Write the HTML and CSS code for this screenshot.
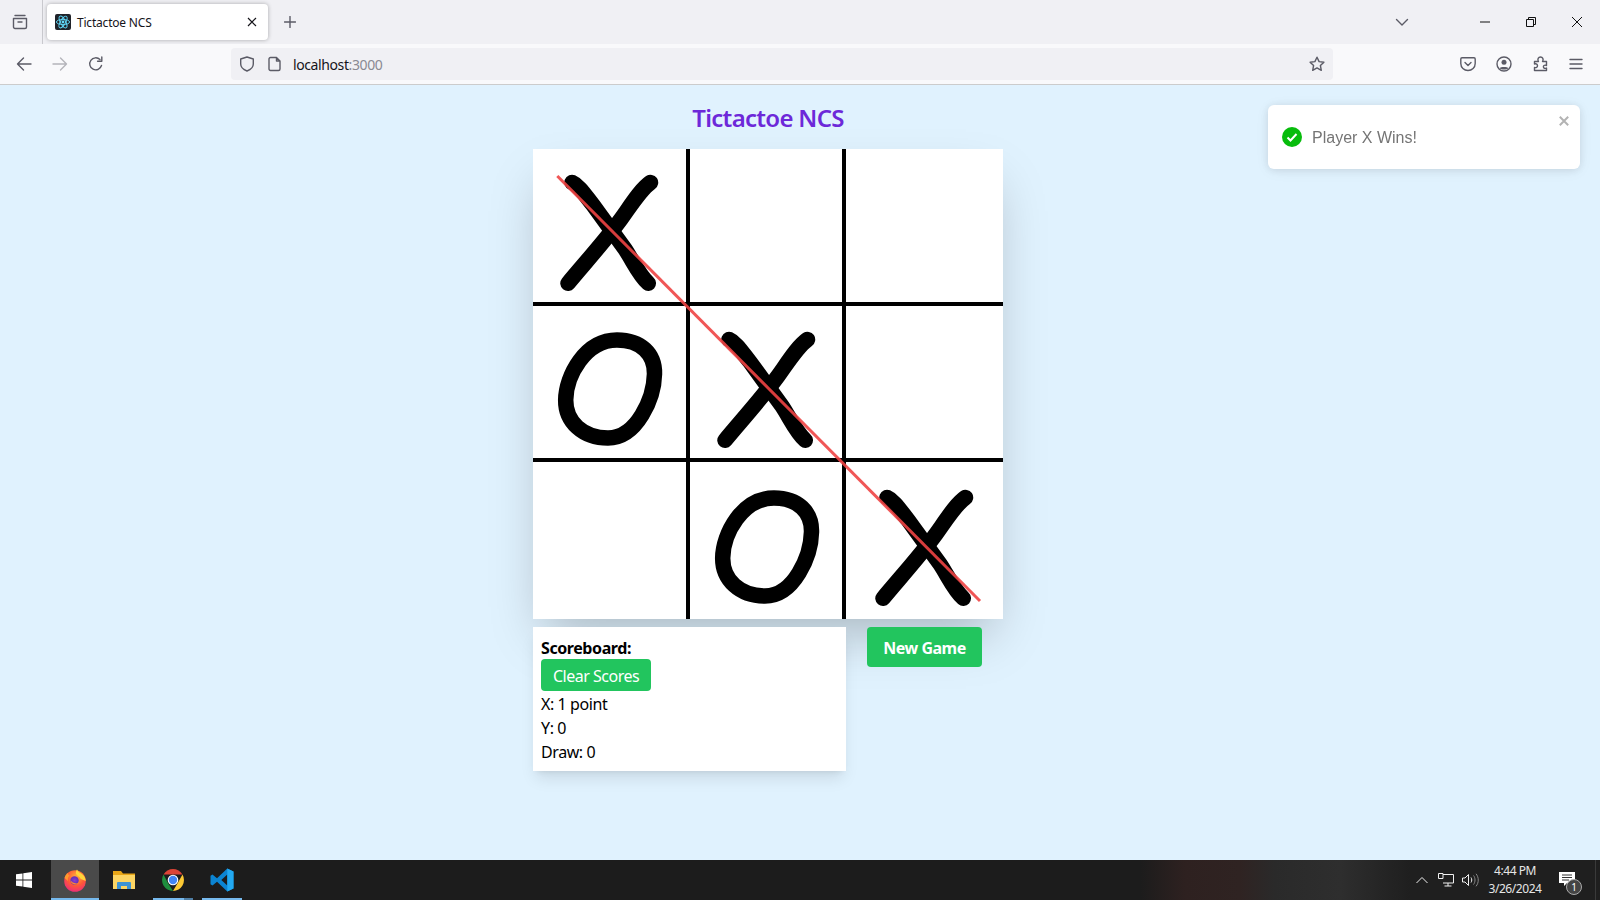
FILE: index.html
```html
<!DOCTYPE html>
<html lang="en">
<head>
<meta charset="utf-8">
<title>Tictactoe NCS</title>
<link rel="stylesheet" href="styles.css">
</head>
<body>
<svg class="defs" width="0" height="0" aria-hidden="true">
  <defs>
    <g id="mark-x">
      <path d="M39 33.500C46 36.500 52 46 60 56L92 100C100 112 106 126 115.3 134.3"/>
      <path d="M117.5 33.500C108 40 98 56 88 70C72 92 50 116 35 134.3"/>
    </g>
    <path id="mark-o" d="M32.7 94C33 70 52 34 84 34C108 34 122 48 121.5 68C121 92 104 132 75 132C50 132 32.5 116 32.7 94Z"/>
  </defs>
</svg>

<header class="tabbar">
  <div class="tabbar-left">
    <svg class="ico" width="16" height="16" viewBox="0 0 16 16"><path d="M3 1.5h10M1.5 4.5h13v8.5a1.5 1.5 0 0 1-1.5 1.5H3A1.5 1.5 0 0 1 1.5 13zM6 8h4"/></svg>
  </div>
  <div class="tab">
    <svg class="favicon" width="16" height="16" viewBox="0 0 16 16">
      <rect width="16" height="16" rx="2" fill="#20232a"/>
      <g fill="none" stroke="#61dafb" stroke-width=".9">
        <ellipse cx="8" cy="8" rx="6.6" ry="2.6"/>
        <ellipse cx="8" cy="8" rx="6.6" ry="2.6" transform="rotate(60 8 8)"/>
        <ellipse cx="8" cy="8" rx="6.6" ry="2.6" transform="rotate(120 8 8)"/>
      </g>
      <circle cx="8" cy="8" r="1.4" fill="#61dafb"/>
    </svg>
    <span class="tab-title">Tictactoe NCS</span>
    <svg class="tab-close" width="10" height="10" viewBox="0 0 10 10"><path d="M1 1l8 8M9 1l-8 8"/></svg>
  </div>
  <svg class="ico new-tab" width="12" height="12" viewBox="0 0 12 12"><path d="M6 .5v11M.5 6h11"/></svg>
  <div class="tabbar-right">
    <svg class="ico tab-list" width="14" height="14" viewBox="0 0 14 14"><path d="M1.500 4.500L7 10l5.500-5.500"/></svg>
    <div class="winbtn"><svg class="win" width="12" height="12" viewBox="0 0 12 12"><path d="M1 6h10"/></svg></div>
    <div class="winbtn"><svg class="win" width="12" height="12" viewBox="0 0 12 12"><path d="M1.500 3.500h7v7h-7zM3.500 3.500v-2h7v7h-2"/></svg></div>
    <div class="winbtn"><svg class="win" width="12" height="12" viewBox="0 0 12 12"><path d="M1 1l10 10M11 1L1 11"/></svg></div>
  </div>
</header>

<nav class="toolbar">
  <div class="nav-buttons">
    <svg class="ico" width="16" height="16" viewBox="0 0 16 16"><path d="M15 8H1.500M7.500 2l-6 6 6 6"/></svg>
    <svg class="ico faint" width="16" height="16" viewBox="0 0 16 16"><path d="M1 8h13.500M8.500 2l6 6-6 6"/></svg>
    <svg class="ico" width="16" height="16" viewBox="0 0 16 16"><path d="M13.500 9.500A6 6 0 1 1 12 3.600M13.800 1v4.200H9.600"/></svg>
  </div>
  <div class="urlbar">
    <svg class="ico" width="16" height="16" viewBox="0 0 16 16"><path d="M8 1l6.300 2v5c0 3.300-2.600 5.600-6.300 7-3.700-1.400-6.300-3.700-6.300-7V3z"/></svg>
    <svg class="ico page-ico" width="14" height="16" viewBox="0 0 14 16"><path d="M2.500 1.500h6l3.500 3.500v8a1.500 1.500 0 0 1-1.500 1.500h-8A1.500 1.500 0 0 1 1 13V3a1.500 1.500 0 0 1 1.500-1.500zM8.500 1.500V5H12"/></svg>
    <span class="url">localhost<span class="url-dim">:3000</span></span>
    <svg class="ico star" width="16" height="16" viewBox="0 0 16 16"><path d="M8 1.200l2.100 4.400 4.800.6-3.500 3.300.9 4.800L8 11.900l-4.300 2.400.9-4.800L1.100 6.200l4.800-.6z"/></svg>
  </div>
  <div class="toolbar-right">
    <svg class="ico" width="16" height="16" viewBox="0 0 16 16"><path d="M2 1.800h12a1.200 1.200 0 0 1 1.200 1.200v4.500c0 4-3.200 7-7.200 7s-7.200-3-7.200-7V3A1.200 1.200 0 0 1 2 1.800zM5 6.500l3 3 3-3"/></svg>
    <svg class="ico" width="16" height="16" viewBox="0 0 16 16"><circle cx="8" cy="8" r="7"/><circle cx="8" cy="6.300" r="2.500" class="solid"/><path d="M3.500 12c1-1.500 8-1.500 9 0-1.500 2-7.500 2-9 0z" class="solid"/></svg>
    <svg class="ico ext-ico" width="16" height="16" viewBox="0 0 16 16"><path d="M1.500 5.500h4C4 3 5.500 1 7.500 1s3.500 2 2 4.500h4v4c-2.300-1-3.500.5-3 1.800.3 1 1.500 1.500 3 .7v2.500h-12v-3c2 .5 3-.6 3-1.800s-1.200-2.400-3-1.700z"/></svg>
    <svg class="ico" width="16" height="16" viewBox="0 0 16 16"><path d="M2 3.500h12M2 8h12M2 12.500h12"/></svg>
  </div>
</nav>

<main class="page">
  <div class="container">
    <h1 class="title">Tictactoe NCS</h1>
    <div class="board">
      <div class="cell cell-r cell-b"><svg class="mark" viewBox="0 0 152.670 152.670"><use href="#mark-x"/></svg></div>
      <div class="cell cell-r cell-b"></div>
      <div class="cell cell-b"></div>
      <div class="cell cell-r cell-b"><svg class="mark" viewBox="0 0 152.670 152.670"><use href="#mark-o"/></svg></div>
      <div class="cell cell-r cell-b"><svg class="mark" viewBox="0 0 152.670 152.670"><use href="#mark-x"/></svg></div>
      <div class="cell cell-b"></div>
      <div class="cell cell-r"></div>
      <div class="cell cell-r"><svg class="mark" viewBox="0 0 152.670 152.670"><use href="#mark-o"/></svg></div>
      <div class="cell"><svg class="mark" viewBox="0 0 152.670 152.670"><use href="#mark-x"/></svg></div>
      <svg class="win-line" viewBox="0 0 470 470"><line x1="24.300" y1="27" x2="447" y2="452"/></svg>
    </div>
    <div class="under">
      <section class="scoreboard">
        <div class="score-row score-head">Scoreboard:</div>
        <button class="btn">Clear Scores</button>
        <div class="score-row">X: 1 point</div>
        <div class="score-row">Y: 0</div>
        <div class="score-row">Draw: 0</div>
      </section>
      <div class="actions"><button class="btn btn-bold">New Game</button></div>
    </div>
  </div>
</main>

<div class="toast">
  <svg class="toast-icon" width="20" height="20" viewBox="0 0 20 20"><circle cx="10" cy="10" r="10" fill="#07bc0c"/><path d="M5.500 10.500l3 3 6-6.500" fill="none" stroke="#fff" stroke-width="2"/></svg>
  <span class="toast-text">Player X Wins!</span>
  <svg class="toast-close" width="10" height="10" viewBox="0 0 10 10"><path d="M.8.800l8.400 8.400M9.200.800L.8 9.200"/></svg>
</div>

<footer class="taskbar">
  <div class="start"><svg width="16" height="16" viewBox="0 0 16 16" fill="#fff"><path d="M0 2.300l6.500-.9v6.200H0zM7.300 1.300L16 0v7.600H7.300zM0 8.400h6.500v6.200L0 13.700zM7.300 8.400H16V16l-8.700-1.300z"/></svg></div>
  <div class="task task-active">
    <svg width="24" height="24" viewBox="0 0 24 24">
      <defs>
        <radialGradient id="ff" cx=".55" cy=".3" r=".8"><stop offset="0" stop-color="#ffb03a"/><stop offset=".5" stop-color="#ff5a36"/><stop offset="1" stop-color="#e9218a"/></radialGradient>
        <radialGradient id="ffc" cx=".5" cy=".5" r=".6"><stop offset="0" stop-color="#8a3fd0"/><stop offset="1" stop-color="#5a2bb0"/></radialGradient>
      </defs>
      <circle cx="12" cy="13" r="10.800" fill="url(#ff)"/>
      <path d="M14 1.500c1 2.500 3 3 5 4.500 2.500 2 3.700 4.500 3.800 7l-5-2c-1-2.500-4-3-5-5.500 0-1.500.5-3 1.200-4z" fill="#ffd43a"/>
      <path d="M1.500 10c1-3 2-4 3.500-5 0 1.500.5 2 1.500 2.500C5 9 4.500 11 5 13z" fill="#ff9a2e"/>
      <circle cx="11.500" cy="12.500" r="4.200" fill="url(#ffc)"/>
      <path d="M7.500 12c0 3 2.500 4.500 5 4.500 1.500 0 3-.8 3.600-2-1 .8-2.600 1.200-4 .8-2-.5-3.500-1.500-4.600-3.300z" fill="#ff8a2e"/>
    </svg>
  </div>
  <div class="task">
    <svg width="22" height="20" viewBox="0 0 22 20">
      <path d="M0 1h8l2 2.500h12V19H0z" fill="#e8a617"/>
      <path d="M0 5h22v14H0z" fill="#fcd563"/>
      <path d="M4 19v-6a1 1 0 0 1 1-1h12a1 1 0 0 1 1 1v6h-4v-3H8v3z" fill="#3d93d4"/>
    </svg>
  </div>
  <div class="task task-open task-multi">
    <svg width="24" height="24" viewBox="0 0 24 24">
      <path d="M2.500 6.500A11 11 0 0 1 21.500 6.500H12z" fill="#db4437"/>
      <path d="M21.500 6.500A11 11 0 0 1 12 23l5-8.500z" fill="#fcc934"/>
      <path d="M12 23A11 11 0 0 1 2.500 6.500L7 15z" fill="#1e8e3e"/>
      <circle cx="12" cy="12" r="5.300" fill="#fff"/>
      <circle cx="12" cy="12" r="4.200" fill="#4285f4"/>
    </svg>
  </div>
  <div class="task task-open">
    <svg width="24" height="24" viewBox="0 0 24 24">
      <path d="M17.300 0.500L23.500 3.500V20.500L17.300 23.500L7 13.800L2.500 17.400L0.500 16.200V7.800L2.500 6.600L7 10.200zM17.300 6.500L11.300 12L17.300 17.500z" fill="#0b84d2"/>
      <path d="M17.300 0.500L23.500 3.500V20.500L17.300 23.500z" fill="#23a9f1"/>
    </svg>
  </div>
  <div class="tray">
    <svg class="tray-ico tray-up" width="12" height="8" viewBox="0 0 12 8"><path d="M.5 7L6 1.500 11.500 7"/></svg>
    <svg class="tray-ico tray-net" width="16" height="14" viewBox="0 0 16 14"><path d="M5 1.500h10.500v8.500H5M10 10v3M6.500 13h7M.5.500h4.500v5H.5z"/></svg>
    <svg class="tray-ico tray-vol" width="17" height="14" viewBox="0 0 17 14"><path d="M.5 5h2.500L6.500 1.500v11L3 9H.5zM9 4.500c1 1.500 1 3.500 0 5"/><path class="dim" d="M11.500 2.500c2 2.500 2 6.500 0 9M14 .8c3 3.500 3 9 0 12.500"/></svg>
    <div class="clock"><span>4:44 PM</span><span>3/26/2024</span></div>
    <div class="notify">
      <svg width="16" height="15" viewBox="0 0 16 15"><path d="M0 0h16v11H8l-3 3v-3H0z" fill="#fff"/><path d="M3 3h10M3 5.500h10M3 8h7" stroke="#333" stroke-width="1"/></svg>
      <span class="badge">1</span>
    </div>
  </div>
</footer>
</body>
</html>
```
FILE: styles.css
```css
* { box-sizing: border-box; }
html, body { margin: 0; padding: 0; }
body {
  width: 1600px;
  height: 900px;
  overflow: hidden;
  display: flex;
  flex-direction: column;
  background: #e0f2fe;
  font-family: "Noto Sans", "Open Sans", sans-serif;
  color: #000;
}
.defs { position: absolute; }
svg { display: block; flex: none; }

.ico { fill: none; stroke: #5b5b66; stroke-width: 1.4; stroke-linejoin: round; stroke-linecap: round; }
.ico .solid { fill: #5b5b66; stroke: none; }
.faint { stroke: #b4b4ba; }

.tabbar { height: 44px; flex: none; display: flex; align-items: center; background: #f0f0f4; }
.tabbar-left {
  width: 43px; height: 44px; padding-left: 12px;
  display: flex; align-items: center;
  border-right: 1px solid #c9c9ce;
}
.tab {
  width: 221px; height: 36px; margin-left: 4px;
  display: flex; align-items: center; gap: 6px; padding: 0 11px 0 8px;
  background: #fff; border-radius: 4px;
  box-shadow: 0 0 4px rgba(0,0,0,.3);
}
.tab-title { flex: 1; font-size: 12px; color: #15141a; letter-spacing: -.2px; }
.tab-close { fill: none; stroke: #15141a; stroke-width: 1.2; }
.new-tab { margin-left: 16px; }
.tabbar-right { margin-left: auto; display: flex; align-items: center; }
.tab-list { margin-right: 53px; }
.winbtn { width: 46px; height: 44px; display: flex; align-items: center; justify-content: center; }
.win { fill: none; stroke: #111; stroke-width: 1; }

.toolbar {
  height: 41px; flex: none; display: flex; align-items: center;
  background: #f9f9fb; border-bottom: 1px solid #ccc;
}
.nav-buttons { width: 231px; padding-left: 16px; display: flex; gap: 20px; }
.urlbar {
  width: 1102px; height: 32px; padding: 0 8px;
  display: flex; align-items: center;
  background: #f0f0f4; border-radius: 4px;
}
.page-ico { margin-left: 13px; }
.url { margin-left: 11px; font-size: 14px; color: #15141a; letter-spacing: -.4px; }
.url-dim { color: #8a8a92; }
.star { margin-left: auto; }
.toolbar-right { margin-left: 127px; display: flex; gap: 20px; }
.ext-ico { transform: translateX(1px); }

.page { flex: 1; min-height: 0; }
.container { width: 1536px; display: flex; flex-direction: column; align-items: center; padding-top: 17px; }
.title { margin: 0 0 15px; font-size: 24px; line-height: 32px; font-weight: 600; color: #6d28d9; letter-spacing: -.7px; }
.board {
  position: relative;
  width: 470px; height: 470px;
  display: grid; grid-template-columns: repeat(3, 1fr); grid-template-rows: repeat(3, 1fr);
  background: #fff;
  box-shadow: 0 25px 50px -12px rgba(0,0,0,.25);
}
.cell { min-width: 0; min-height: 0; display: flex; align-items: center; justify-content: center; }
.cell-r { border-right: 4px solid #000; }
.cell-b { border-bottom: 4px solid #000; }
.mark {
  width: 152.670px; height: 152.670px;
  fill: none; stroke: #000; stroke-width: 15.500; stroke-linecap: round; stroke-linejoin: round;
}
.win-line { position: absolute; inset: 0; width: 470px; height: 470px; }
.win-line line { stroke: #ef4444; stroke-width: 3; opacity: .9; }

.under { position: relative; width: 470px; margin-top: 8px; display: flex; align-items: flex-start; }
.scoreboard {
  width: 313px; padding: 8px;
  background: #fff;
  font-size: 16px; line-height: 24px; letter-spacing: -.42px;
  box-shadow: 0 10px 15px -3px rgba(0,0,0,.1), 0 4px 6px -4px rgba(0,0,0,.1);
}
.score-row { height: 24px; padding-top: 1px; }
.score-head { font-weight: 700; }
.actions { flex: 1; display: flex; justify-content: center; }
.btn {
  display: block; border: 0; margin: 0;
  padding: 5px 12px 3px; height: 32px;
  background: #22c55e; color: #fff;
  font: inherit; font-size: 16px; line-height: 24px; letter-spacing: -.5px;
  border-radius: 4px;
}
.btn-bold { height: 40px; padding: 9px 16px 7px; font-weight: 700; letter-spacing: -.5px; }

.toast {
  position: fixed; top: 105px; left: 1268px;
  width: 312px; height: 64px; padding: 0 14px;
  display: flex; align-items: center; gap: 10px;
  background: #fff; border-radius: 6px;
  box-shadow: 0 1px 10px 0 rgba(0,0,0,.1), 0 2px 15px 0 rgba(0,0,0,.05);
  font-family: "Liberation Sans", Arial, sans-serif; font-size: 16px; color: #757575;
}
.toast-text { padding-top: 2px; }
.toast-close { position: absolute; top: 11px; right: 11px; fill: none; stroke: #b3b3b3; stroke-width: 2; }

.taskbar {
  height: 40px; flex: none; display: flex; align-items: stretch;
  background: linear-gradient(90deg, #1c1c1c 1140px, #2e2120 1185px, #2f2322 1240px, #2a2a2a 1275px, #2e2e2e 1340px, #1f1f1f 1410px);
}
.start { width: 51px; padding-left: 16px; display: flex; align-items: center; }
.task { width: 49px; display: flex; align-items: center; justify-content: center; }
.task-active { width: 48px; background: linear-gradient(#76b9ed, #76b9ed) bottom / 100% 2px no-repeat, #4a4a4a; }
.task-open { background: linear-gradient(#76b9ed, #76b9ed) 5px 100% / 40px 2px no-repeat; }
.task-multi { background: linear-gradient(#4f7fa6, #4f7fa6) 36px 100% / 9px 2px no-repeat, linear-gradient(#76b9ed, #76b9ed) 5px 100% / 40px 2px no-repeat; }
.tray { margin-left: auto; margin-right: 4px; display: flex; align-items: center; color: #e6e6e6; padding-right: 8px; border-right: 1px solid #3a3a3a; }
.tray-ico { fill: none; stroke: #f0f0f0; stroke-width: 1; }
.tray-up { margin-right: 10px; }
.tray-net { margin-right: 8px; }
.tray-vol { margin-right: 6px; }
.tray-ico .dim { stroke: #888; }
.clock {
  width: 60px; margin-right: 2px;
  display: flex; flex-direction: column; align-items: center;
  font-size: 12px; line-height: 18px; letter-spacing: -.45px;
}
.notify { position: relative; width: 40px; height: 40px; display: flex; align-items: center; justify-content: center; padding-bottom: 2px; }
.badge {
  position: absolute; left: 19px; top: 19px;
  width: 16px; height: 16px; border-radius: 50%;
  display: flex; align-items: center; justify-content: center;
  background: #444; border: 1px solid #aaa; color: #fff; font-size: 10px; line-height: 1;
}
```
